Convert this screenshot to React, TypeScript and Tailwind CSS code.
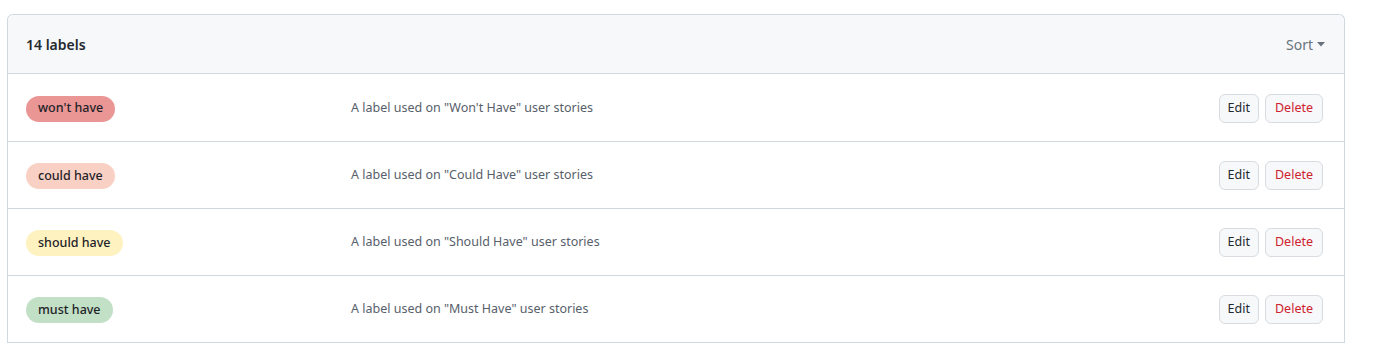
const labels = [
  { name: "won't have", color: 'bg-[#e99695]', desc: `A label used on "Won't Have" user stories` },
  { name: 'could have', color: 'bg-[#f9d0c4]', desc: 'A label used on "Could Have" user stories' },
  { name: 'should have', color: 'bg-[#fef2c0]', desc: 'A label used on "Should Have" user stories' },
  { name: 'must have', color: 'bg-[#c2e0c6]', desc: 'A label used on "Must Have" user stories' },
]

export default function App() {
  return (
    <div className="min-h-[346px] bg-white pt-[14px] pl-[7px] font-['Segoe_UI','Noto_Sans',sans-serif] text-[#24292f]">
      <div className="w-[1338px] rounded-t-md border border-b-0 border-[#d0d7de]">
        {/* Header */}
        <div className="flex h-[59px] items-center justify-between rounded-t-md border-b border-[#d0d7de] bg-[#f6f8fa] pl-[18px] pr-[19px]">
          <span className="text-[14px] font-semibold">14 labels</span>
          <button className="flex items-center gap-[4px] text-[14px] text-[#6a737d]">
            Sort
            <svg width="8" height="5" viewBox="0 0 8 5" className="mt-[1px]">
              <path d="M0 0h8L4 4.5z" fill="#6a737d" />
            </svg>
          </button>
        </div>

        {/* Rows */}
        {labels.map((l, i) => (
          <div
            key={l.name}
            className={`flex items-center border-b border-[#d0d7de] pl-[18px] pr-[21px] pt-[1px] ${i === 0 ? 'h-[68px]' : 'h-[67px]'}`}
          >
            <div className="w-[325px]">
              <span className={`inline-flex h-[26px] items-center rounded-full px-[12px] text-[12.5px] font-medium text-[#1f2328] ${l.color}`}>
                {l.name}
              </span>
            </div>
            <div className="flex-1 text-[12.5px] text-[#57606a]">{l.desc}</div>
            <div className="flex gap-[6px]">
              <button className="h-[29px] rounded-md border border-[#d8dbdf] bg-[#f6f8fa] px-[8px] text-[12.5px] text-[#24292f]">
                Edit
              </button>
              <button className="h-[29px] rounded-md border border-[#d8dbdf] bg-[#f6f8fa] px-[9px] text-[12.5px] text-[#cf222e]">
                Delete
              </button>
            </div>
          </div>
        ))}
      </div>
    </div>
  )
}
